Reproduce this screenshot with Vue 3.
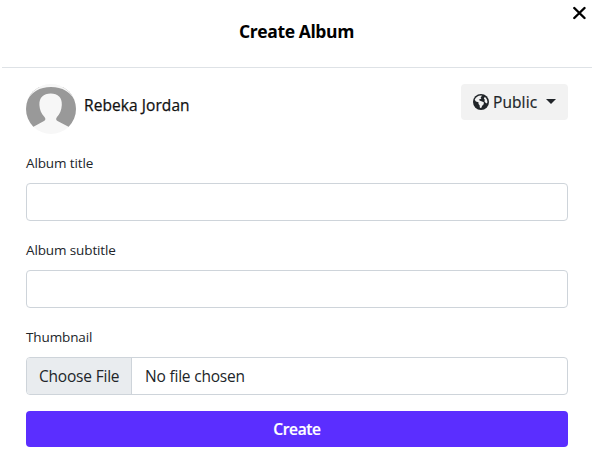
<script setup>
import { ref } from 'vue'

const title = ref('')
const subtitle = ref('')
</script>

<template>
  <main class="dialog">
    <header class="dialog-header">
      <h1>Create Album</h1>
      <button class="close" type="button" aria-label="Close">
        <svg viewBox="0 0 14 14" width="14" height="14"><path d="M2.300 2 12.500 12M12.500 2 2.300 12" /></svg>
      </button>
    </header>

    <form class="dialog-body" @submit.prevent>
      <div class="owner">
        <svg class="avatar" viewBox="0 0 50 50" width="50" height="50">
          <defs><clipPath id="disc"><circle cx="25" cy="25" r="25" /></clipPath></defs>
          <g clip-path="url(#disc)">
            <rect width="50" height="50" fill="#f7f7f7" />
            <path d="M0 3H50V43H43L31.500 37Q29 35.500 31 33C34 30 35.500 26 35.800 21C36.200 13.500 32 9.600 24.700 9.600S13.200 13.500 13.400 21C13.600 26 15.500 30 18.500 33Q20.500 35.500 18 37L7 43H0Z" fill="#999" />
            <path d="M0 0H50V18Q42 3 25 3T0 18Z" fill="#f7f7f7" />
          </g>
        </svg>
        <span class="name">Rebeka Jordan</span>
        <button class="privacy" type="button">
          <svg class="globe" viewBox="0 0 16 16" width="16" height="16">
            <circle cx="8" cy="8" r="8" fill="#212529" />
            <path fill="#f2f2f2" d="M1.700 5.700C2.700 3.200 5 1.600 8 1.500L9.200 1.800 7.600 3.200 8.300 4.500 6.900 5.300 5.800 5.700 7 6.800 9.100 7.400 11 8.600 10.500 10.400 9.200 11.700 8.200 14 6.900 13.800 6.600 11.300 5.500 9.900V8.300L2.900 7.400Z" />
            <path fill="#f2f2f2" d="M11.300 3.200 12.700 3.500 14 5.700 14.500 8.200 13.500 9.500 12.300 8.500 11.400 7.200 11.900 5.700 10.900 4.700Z" />
          </svg>
          <span class="privacy-text">Public</span>
          <span class="caret"></span>
        </button>
      </div>

      <label class="field">
        <span class="label">Album title</span>
        <input v-model="title" class="control" type="text" />
      </label>
      <label class="field">
        <span class="label">Album subtitle</span>
        <input v-model="subtitle" class="control" type="text" />
      </label>
      <div class="field">
        <span class="label">Thumbnail</span>
        <div class="control file">
          <span class="choose"><span>Choose File</span></span>
          <span class="chosen">No file chosen</span>
        </div>
      </div>
      <button class="submit" type="submit"><span>Create</span></button>
    </form>
  </main>
</template>

<style>
body {
  background: #fff;
}
</style>

<style scoped>
.dialog,
.dialog * {
  box-sizing: border-box;
}
.dialog {
  width: 592px;
  height: 459px;
  overflow: hidden;
  font-family: "Open Sans", "Noto Sans", sans-serif;
  font-size: 16px;
  line-height: 24px;
  color: #212529;
}
button {
  font: inherit;
  color: inherit;
  border: 0;
  padding: 0;
}
.dialog-header {
  position: relative;
  height: 68px;
  margin-left: 2px;
  padding-top: 19px;
  border-bottom: 1px solid #dee2e6;
}
h1 {
  margin: 0;
  padding-right: 1px;
  text-align: center;
  font-size: 17.5px;
  line-height: 24px;
  font-weight: 700;
  letter-spacing: -0.4px;
  color: #000;
}
.close {
  position: absolute;
  top: 6px;
  right: 6px;
  display: flex;
  background: none;
}
.close path {
  fill: none;
  stroke: #000;
  stroke-width: 2.4;
  stroke-linecap: round;
}
.dialog-body {
  padding: 16px 24px 0 26px;
}
.owner {
  display: flex;
  align-items: flex-start;
  height: 50px;
  margin-bottom: 18px;
}
.name {
  margin: 9px auto 0 8px;
  font-size: 15.5px;
  letter-spacing: 0.08px;
  color: #111;
  -webkit-text-stroke: 0.25px #111;
}
.privacy {
  display: flex;
  align-items: center;
  width: 107px;
  height: 36px;
  padding: 0 12px;
  border-radius: 4px;
  background: #f2f2f2;
  font-size: 15.5px;
}
.privacy-text {
  margin-left: 4px;
  letter-spacing: 0.1px;
  -webkit-text-stroke: 0.2px #212529;
}
.caret {
  margin: -2px 0 0 auto;
  border: 5px solid transparent;
  border-top-color: #212529;
  border-bottom: 0;
}
.field {
  display: block;
  margin-bottom: 18px;
}
.label {
  display: block;
  height: 31px;
  line-height: 22px;
  font-size: 13.5px;
  letter-spacing: -0.12px;
}
.control {
  display: flex;
  width: 100%;
  height: 38px;
  padding: 0 12px;
  border: 1px solid #ced4da;
  border-radius: 4px;
  background: #fff;
  font: inherit;
  outline: 0;
}
.file {
  padding: 0;
  overflow: hidden;
  align-items: center;
  font-size: 15.5px;
  letter-spacing: -0.2px;
}
.choose {
  display: flex;
  align-items: center;
  width: 105px;
  height: 36px;
  padding-left: 12px;
  background: #e9ecef;
  border-right: 1px solid #ced4da;
  white-space: nowrap;
}
.chosen {
  margin-left: 13px;
}
.submit {
  display: block;
  width: 100%;
  height: 36px;
  margin-top: -2px;
  border-radius: 4px;
  background: #5b2eff;
  color: #fff;
  font-size: 15.5px;
  font-weight: 600;
  letter-spacing: -0.35px;
  -webkit-text-stroke: 0.2px #fff;
}
</style>
